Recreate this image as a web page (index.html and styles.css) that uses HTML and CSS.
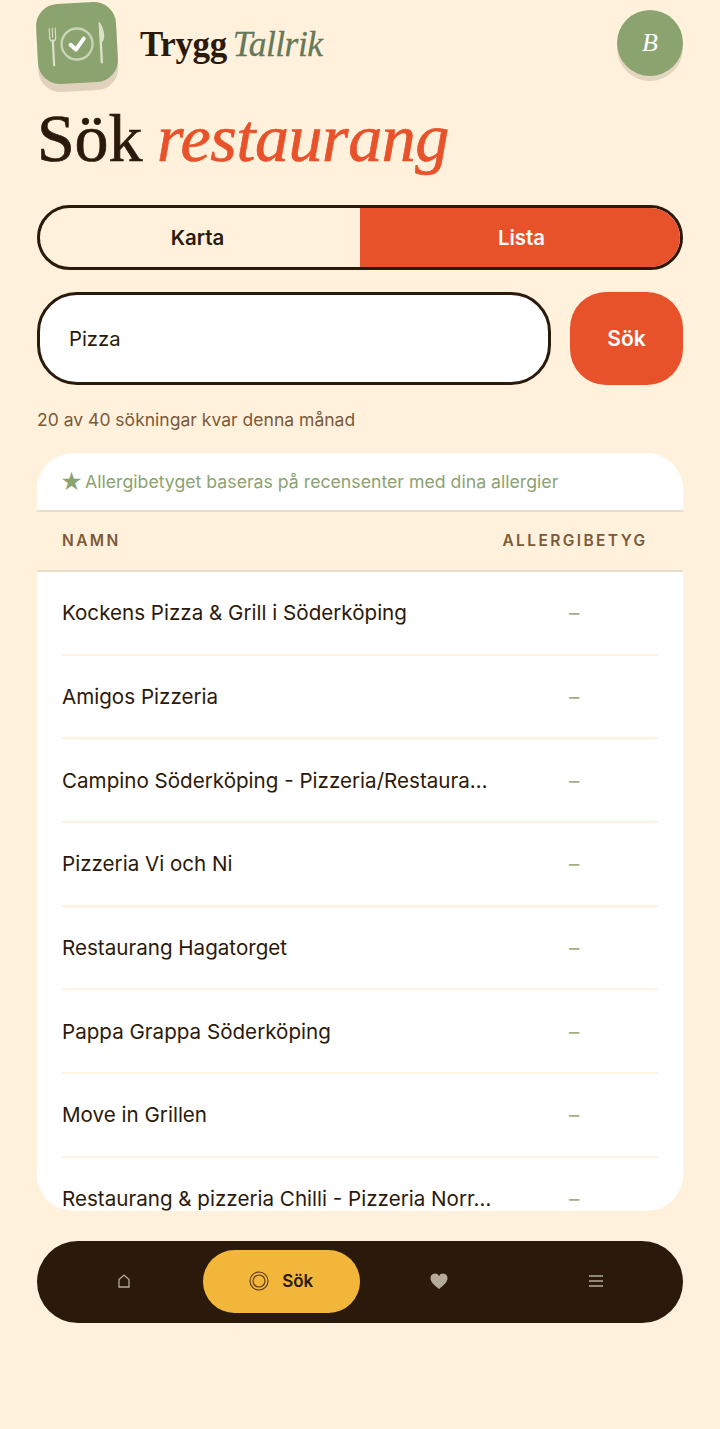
FILE: index.html
```html
<!DOCTYPE html>
<html lang="sv">
<head>
<meta charset="utf-8">
<title>Trygg Tallrik</title>
<link rel="stylesheet" href="styles.css">
</head>
<body>
<div class="page">
  <header class="top">
    <div class="brand">
      <div class="logo">
        <svg viewBox="0 0 80 80" width="80" height="80" class="logo-svg">
          <g fill="none" stroke="#dde0c8" stroke-linecap="round">
            <path d="M13 24v9M16 24v9M19 24v9" stroke-width="1.100"/>
            <path d="M13 33c0 3 1.300 4 3 4s3-1 3-4" stroke-width="1.300"/>
            <path d="M16 36v25" stroke-width="2.200"/>
            <circle cx="40" cy="41" r="15.500" stroke="#c9d4b4" stroke-width="2.400"/>
          </g>
          <path d="M33.500 41.500l5 5 8.500-10.500" fill="none" stroke="#fff" stroke-width="4" stroke-linecap="round" stroke-linejoin="round"/>
          <path d="M63 20c3 3 5 10 4.500 15-.3 3-1.300 5-2.500 5.500v20a1.200 1.200 0 0 1-2.400 0V21c0-1 .4-1.500.4-1z" fill="#dde0c8"/>
        </svg>
      </div>
      <div class="wordmark"><span class="wm-a">Trygg</span> <span class="wm-b">Tallrik</span></div>
    </div>
    <div class="avatar">B</div>
  </header>

  <h1 class="title">Sök <em>restaurang</em></h1>

  <div class="toggle">
    <div class="toggle-item first">Karta</div>
    <div class="toggle-item active">Lista</div>
  </div>

  <div class="search">
    <div class="search-input">Pizza</div>
    <div class="search-btn">Sök</div>
  </div>

  <p class="quota">20 av 40 sökningar kvar denna månad</p>

  <section class="card">
    <div class="card-note"><span class="star">★</span><span>Allergibetyget baseras på recensenter med dina allergier</span></div>
    <div class="thead"><span>NAMN</span><span>ALLERGIBETYG</span></div>
    <div class="row"><span class="name">Kockens Pizza &amp; Grill i Söderköping</span><span class="score">–</span></div>
    <div class="row"><span class="name">Amigos Pizzeria</span><span class="score">–</span></div>
    <div class="row"><span class="name">Campino Söderköping - Pizzeria/Restaura…</span><span class="score">–</span></div>
    <div class="row"><span class="name">Pizzeria Vi och Ni</span><span class="score">–</span></div>
    <div class="row"><span class="name">Restaurang Hagatorget</span><span class="score">–</span></div>
    <div class="row"><span class="name">Pappa Grappa Söderköping</span><span class="score">–</span></div>
    <div class="row"><span class="name">Move in Grillen</span><span class="score">–</span></div>
    <div class="row"><span class="name">Restaurang &amp; pizzeria Chilli - Pizzeria Norr…</span><span class="score">–</span></div>
  </section>

  <nav class="nav">
    <div class="nav-item">
      <svg width="12" height="14" viewBox="0 0 12 14"><path d="M1 13V5.500L6 1l5 4.500V13z" fill="none" stroke="#b5aa9a" stroke-width="1.300"/></svg>
    </div>
    <div class="nav-item on">
      <svg width="20" height="20" viewBox="0 0 20 20" fill="none" stroke="#5a3a1e"><circle cx="10" cy="10" r="9" stroke-width="1.100"/><circle cx="10" cy="10" r="6" stroke-width="1.100"/></svg>
      <span>Sök</span>
    </div>
    <div class="nav-item">
      <svg width="18" height="16" viewBox="0 0 18 16"><path d="M9 16C4 12 .5 9 .5 5a4.500 4.500 0 0 1 8.500-2 4.500 4.500 0 0 1 8.500 2c0 4-3.500 7-8.500 11z" fill="#b5aa9a"/></svg>
    </div>
    <div class="nav-item">
      <svg width="14" height="12" viewBox="0 0 14 12"><path d="M0 1h14M0 6h14M0 11h14" stroke="#b5aa9a" stroke-width="1.600"/></svg>
    </div>
  </nav>
</div>
</body>
</html>
```
FILE: styles.css
```css
* { box-sizing: border-box; }
html, body { margin: 0; padding: 0; }
body {
  background: #fff1dc;
  color: #2b1a0b;
  font-family: "Inter", "Liberation Sans", sans-serif;
  height: 1429px;
  overflow: hidden;
}
.page { padding: 0 37px; }
.top { display: flex; justify-content: space-between; align-items: flex-start; height: 100px; }
.brand { display: flex; align-items: center; gap: 23px; height: 88px; }
.logo {
  width: 80px; height: 80px; margin-top: -3px;
  background: #8ba36f; border-radius: 22px;
  transform: rotate(-3deg);
  box-shadow: 0 8px 0 #dfd1bb;
  flex: none;
}
.logo-svg { display: block; }
.wordmark { font-family: "Liberation Serif", serif; font-size: 35px; letter-spacing: -0.4px; word-spacing: -2.500px; }
.wm-a { font-weight: 700; }
.wm-b { font-style: italic; font-size: 35.500px; letter-spacing: -0.5px; color: #66785a; -webkit-text-stroke: 0.3px #66785a; }
.avatar {
  width: 66px; height: 66px; margin-top: 10px; border-radius: 50%;
  background: #8ba36f; color: #fff;
  font: italic 26px "Liberation Serif", serif;
  display: flex; align-items: center; justify-content: center;
  box-shadow: 0 5px 0 #e3d5bf;
}
.title {
  margin: 0 0 25px; height: 80px;
  font-family: "Liberation Serif", serif; font-size: 68px; font-weight: 400; line-height: 76px;
  letter-spacing: -0.2px; word-spacing: -2px;
  -webkit-text-stroke: 0.7px currentColor;
}
.title em { color: #e8522a; letter-spacing: -0.4px; }
.toggle {
  display: grid; grid-template-columns: 1fr 1fr;
  height: 65px; border: 3px solid #2b1a0b; border-radius: 33px; overflow: hidden;
}
.toggle-item { display: flex; align-items: center; justify-content: center; font-size: 20.400px; font-weight: 600; }
.toggle-item.first { padding-right: 5px; }
.toggle-item.active { background: #e8522a; color: #fff; padding-left: 3px; }
.search { display: flex; gap: 19px; margin-top: 22px; height: 93px; }
.search-input {
  flex: 1; background: #fff; border: 3px solid #2b1a0b; border-radius: 40px;
  display: flex; align-items: center; padding-left: 29px; font-size: 20.300px;
}
.search-btn {
  width: 113px; background: #e8522a; color: #fff; border-radius: 36px;
  display: flex; align-items: center; justify-content: center; font-size: 21px; font-weight: 600;
}
.quota { margin: 24px 0 0; height: 44px; font-size: 17.550px; line-height: 22px; color: #7a5a3a; }
.card { background: #fff; border-radius: 36px; height: 758px; overflow: hidden; }
.card-note { height: 57px; padding-left: 23px; display: flex; align-items: center; gap: 2px; font-size: 17.700px; color: #8ba36f; }
.star { font-size: 22px; line-height: 1; }
.thead {
  height: 62px; padding: 0 35.500px 2px 25px; background: #fff1dc;
  border-top: 2px solid #e8dccb; border-bottom: 2px solid #e8dccb;
  display: flex; align-items: center; justify-content: space-between;
  font-size: 15.500px; font-weight: 600; letter-spacing: 2.400px; color: #7a5a3a;
}
.row {
  margin: 0 25px; height: 83.670px; border-bottom: 2px solid #fff4e2;
  display: grid; grid-template-columns: 427px 1fr; align-items: center; font-size: 20.600px;
}
.name { white-space: nowrap; }
.score { padding-left: 80px; color: #9db083; }
.nav {
  margin-top: 30px; height: 82px; border-radius: 41px; background: #2b1a0b;
  display: grid; grid-template-columns: repeat(4, 1fr); align-items: center;
  padding: 0 8px 2px;
}
.nav-item { display: flex; align-items: center; justify-content: center; gap: 13px; height: 63px; }
.nav-item.on { background: #f2b63a; border-radius: 32px; font-size: 17px; font-weight: 600; }
```
